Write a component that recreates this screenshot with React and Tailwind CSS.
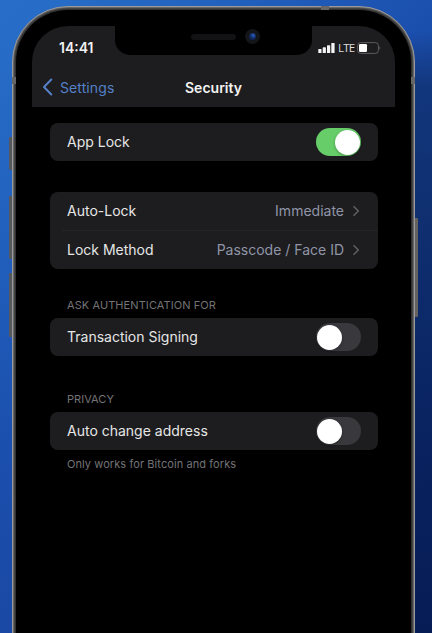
import React from "react";

function Toggle({ on }) {
  return (
    <div className={`flex h-[28px] w-[45px] items-center rounded-full ${on ? "justify-end bg-[#67cd69] pr-[1px]" : "bg-[#39383d] pl-[1px]"}`}>
      <div className="size-[25px] rounded-full bg-white shadow-[0_1px_3px_rgba(0,0,0,0.3)]" />
    </div>
  );
}

function Value({ children }) {
  return (
    <div className="flex items-center text-[14px] text-[#9095a7]">
      <span className="pb-[2px]">{children}</span>
      <svg className="mr-[1px] ml-[8px]" width="8" height="12" viewBox="0 0 8 12" fill="none">
        <path d="M1.5 1.2 6.3 6 1.5 10.8" stroke="#626267" strokeWidth="1.4" />
      </svg>
    </div>
  );
}

function Row({ label, children }) {
  return (
    <div className="flex h-[38px] items-center justify-between px-[17px]">
      <span className="pb-[2px] text-[14px] whitespace-nowrap text-[#e6e6e6]">{label}</span>
      {children}
    </div>
  );
}

function StatusBar() {
  return (
    <div className="flex h-[43px] items-center justify-between pr-[14px] pl-[27px]">
      <span className="text-[14px] font-semibold text-[#f2f2f2]">14:41</span>
      <div className="flex items-center">
        <svg width="17" height="12" viewBox="0 0 17 12" fill="#f4f4f4">
          <rect x="0.3" y="7" width="3.2" height="4" rx="0.6" />
          <rect x="4.7" y="5.3" width="3.2" height="5.7" rx="0.6" />
          <rect x="9" y="3.3" width="3.2" height="7.7" rx="0.6" />
          <rect x="13.3" y="1" width="3.3" height="10" rx="0.6" />
        </svg>
        <span className="ml-[3px] w-[17px] text-[11.5px] leading-none tracking-[-0.8px] text-[#dedede] font-['Open_Sans',sans-serif]">LTE</span>
        <svg className="ml-[2px]" width="24" height="12" viewBox="0 0 24 12" fill="none">
          <rect x="0.6" y="0.6" width="20.8" height="10.8" rx="3" stroke="#5c5c5e" />
          <rect x="2" y="2" width="8" height="8" rx="1.2" fill="#fff" />
          <path d="M22.4 4.3c1.2.3 1.2 3.1 0 3.4z" fill="#5c5c5e" />
        </svg>
      </div>
    </div>
  );
}

function Screen() {
  return (
    <div className="mx-[16px] mt-[16px]">
      <header className="relative h-[81px] overflow-hidden rounded-t-[36px] bg-[#1d1d1f]">
        <div className="absolute top-0 left-[83px] h-[29px] w-[197px] rounded-b-[15px] bg-black">
          <div className="absolute top-[8px] left-[76px] h-[6px] w-[45px] rounded-full bg-[#121214]" />
          <div className="absolute top-[3px] left-[130px] flex size-[15px] items-center justify-center rounded-full bg-[#141518]">
            <div className="size-[7px] rounded-full bg-[radial-gradient(circle_at_60%_35%,#2450a5_15%,#0e224f_55%,#102d70)]" />
          </div>
        </div>
        <StatusBar />
        <div className="grid h-[36px] grid-cols-3 items-center">
          <div className="flex items-center pl-[10px] text-[#5480c7]">
            <svg width="11" height="18" viewBox="0 0 11 18" fill="none">
              <path d="M9.3 1.5 2 9l7.3 7.5" stroke="currentColor" strokeWidth="2" strokeLinecap="round" strokeLinejoin="round" />
            </svg>
            <span className="ml-[7px] text-[14px] tracking-[0.1px]">Settings</span>
          </div>
          <span className="text-center text-[14px] font-semibold text-[#f2f2f2]">Security</span>
        </div>
      </header>
      <main className="pt-[16px] pr-[17px] pl-[18px]">
        <section className="rounded-[8px] bg-[#1d1d1f]">
          <Row label="App Lock"><Toggle on /></Row>
        </section>
        <section className="mt-[31px] rounded-[8px] bg-[#1d1d1f]">
          <Row label="Auto-Lock"><Value>Immediate</Value></Row>
          <div className="ml-[12px] h-px bg-[#252527]" />
          <Row label="Lock Method"><Value>Passcode / Face ID</Value></Row>
        </section>
        <h2 className="mt-[28px] pl-[17px] text-[11px] leading-[16px] tracking-[0.08px] text-[#737376]">ASK AUTHENTICATION FOR</h2>
        <section className="mt-[5px] rounded-[8px] bg-[#1d1d1f]">
          <Row label="Transaction Signing"><Toggle /></Row>
        </section>
        <h2 className="mt-[35px] pl-[17px] text-[11px] leading-[16px] tracking-[0.05px] text-[#737376]">PRIVACY</h2>
        <section className="mt-[5px] rounded-[8px] bg-[#1d1d1f]">
          <Row label="Auto change address"><Toggle /></Row>
        </section>
        <p className="mt-[6px] pl-[17px] text-[11px] leading-[16px] tracking-[0.08px] text-[#737376]">Only works for Bitcoin and forks</p>
      </main>
    </div>
  );
}

export default function App() {
  return (
    <div className="relative h-[633px] w-[432px] overflow-hidden bg-[linear-gradient(135deg,#286fc9_0%,#2364c0_18%,#1b4fae_42%,#1a47a3_62%)] pt-[6px] pl-[12px] font-['Inter',sans-serif]">
      <div className="absolute top-0 right-0 h-full w-[30px] bg-[linear-gradient(175deg,transparent_5%,#12367c_14%,#0f2f70_35%,#0a2462_65%,#061c55_100%)]" />
      <div className="absolute top-[113px] left-[9px] h-[33px] w-[4px] translate-y-[24px] rounded-l-[1px] bg-[#55585c]" />
      <div className="absolute top-[196px] left-[9px] h-[63px] w-[4px] rounded-l-[1px] bg-[#55585c]" />
      <div className="absolute top-[273px] left-[9px] h-[64px] w-[4px] rounded-l-[1px] bg-[#55585c]" />
      <div className="absolute top-[218px] left-[414px] h-[99px] w-[4px] rounded-r-[1px] bg-[#64615f]" />
      <div className="relative h-[800px] w-[403px] rounded-[56px] border border-[#9a9a9a] bg-[#666666] p-px">
        <div className="h-full rounded-[54px] bg-[#444444] p-px">
          <div className="h-full rounded-[53px] bg-[#303030] p-px">
            <div className="flow-root h-full rounded-[52px] bg-black">
              <Screen />
            </div>
          </div>
        </div>
        <div className="absolute top-[-1px] left-[308px] h-[4px] w-[8px] bg-[#666666]" />
        <div className="absolute top-[70px] left-[-1px] h-[7px] w-[4px] bg-[#666666]" />
        <div className="absolute top-[70px] right-[-1px] h-[7px] w-[4px] bg-[#666666]" />
      </div>
    </div>
  );
}
